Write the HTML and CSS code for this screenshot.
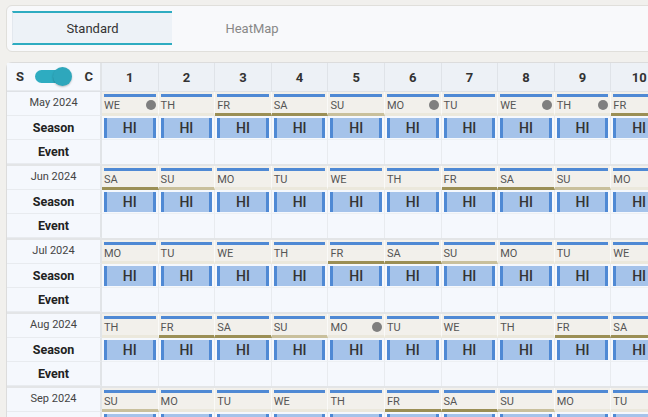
FILE: index.html
```html
<!DOCTYPE html>
<html lang="en">
<head>
    <meta charset="UTF-8">
    <meta name="viewport" content="width=device-width, initial-scale=1.0">
    <title>Season Planner</title>
    <link rel="stylesheet" href="styles.css">
</head>
<body>

<div class="page">
    <div class="view-tabs">
        <div class="tab active">Standard</div>
        <div class="tab">HeatMap</div>
    </div>

    <div class="planner" id="planner">
        <div class="head" id="head">
            <div class="side switch">
                <span>S</span>
                <span class="toggle"><span class="knob"></span></span>
                <span>C</span>
            </div>
        </div>
    </div>
</div>

<script>
const monthNames = ["Jan", "Feb", "Mar", "Apr", "May", "Jun", "Jul", "Aug", "Sep", "Oct", "Nov", "Dec"];
const dayNames = ["SU", "MO", "TU", "WE", "TH", "FR", "SA"];
const months = [[2024, 4], [2024, 5], [2024, 6], [2024, 7], [2024, 8]];
const marked = { "2024-4": [1, 6, 8, 9], "2024-7": [5] };

function buildHeader() {
    let head = document.getElementById("head");
    for (let d = 1; d <= 31; d++) {
        let cell = document.createElement("div");
        cell.className = "num";
        cell.textContent = d;
        head.appendChild(cell);
    }
}

function buildMonth(year, month) {
    let days = new Date(year, month + 1, 0).getDate();
    let marks = marked[year + "-" + month] || [];
    let html = `<div class="side month-name">${monthNames[month]} ${year}</div>
        <div class="side row-label">Season</div>
        <div class="side row-label">Event</div>`;

    for (let d = 1; d <= days; d++) {
        let wd = new Date(year, month, d).getDay();
        let kind = wd == 5 || wd == 6 ? "weekend" : wd == 0 ? "sunday" : "";
        let dot = marks.includes(d) ? '<span class="dot"></span>' : "";
        html += `<div class="day ${kind}"><div class="bar"></div><div class="dn"><span>${dayNames[wd]}</span>${dot}</div></div>
            <div class="season"><div class="hi">HI</div></div>
            <div class="event"></div>`;
    }

    let block = document.createElement("div");
    block.className = "month";
    block.innerHTML = html;
    document.getElementById("planner").appendChild(block);
}

buildHeader();
months.forEach(m => buildMonth(m[0], m[1]));
</script>

</body>
</html>
```

FILE: styles.css
```css
* { box-sizing: border-box; }
body {
    margin: 0;
    background: #f1f0ed;
    font-family: Roboto, "Liberation Sans", sans-serif;
    color: #333;
    overflow: hidden;
}
.page { padding: 5px 0 0 6px; }

.view-tabs {
    display: flex;
    background: #f8f9fb;
    border: 1px solid #e0dfdb;
    border-radius: 6px;
    padding: 5px 5px 6px;
    margin-right: -20px;
}
.tab {
    width: 160px;
    height: 34px;
    display: flex;
    align-items: center;
    justify-content: center;
    font-size: 13px;
    color: #888;
    border-top: 2px solid transparent;
    border-bottom: 2px solid transparent;
}
.tab.active {
    background: #edf2f7;
    color: #333;
    border-color: #2eacc1;
    border-left: 1px solid #e3e8ee;
}

.planner {
    margin-top: 10px;
    width: max-content;
    border: 1px solid #dcdcdc;
    border-radius: 6px 0 0 0;
    background: #f5f8fd;
}
.head, .month {
    display: grid;
    grid-template-columns: 95px;
    grid-auto-columns: 56.6px;
    grid-auto-flow: column;
}
.head {
    height: 29px;
    background: #edf1f6;
    border-bottom: 1px solid #dfe2e6;
    border-radius: 6px 0 0 0;
}
.num {
    display: flex;
    align-items: center;
    justify-content: center;
    font-size: 13px;
    font-weight: bold;
    border-right: 1px solid #dfe3e8;
}
.switch {
    display: flex;
    align-items: center;
    justify-content: space-between;
    padding: 0 7px 0 9px;
    font-size: 13px;
    font-weight: bold;
    border-right: 1px solid #dfe3e8;
}
.toggle {
    position: relative;
    width: 30px;
    height: 13px;
    border-radius: 7px;
    background: #2eacc1;
    margin-right: 8px;
}
.toggle .knob {
    position: absolute;
    right: -7px;
    top: -3px;
    width: 19px;
    height: 19px;
    border-radius: 50%;
    background: #2ea7bc;
    box-shadow: 0 1px 2px rgba(0, 0, 0, 0.25);
}

.month {
    grid-template-rows: 24px 24px 24px;
    border-bottom: 2px solid #e3e5e7;
}
.side {
    background: #f5f8fd;
    border-right: 2px solid #e1e4e7;
    border-bottom: 1px solid #e8ebef;
}
.month-name {
    text-align: center;
    font-size: 11px;
    color: #444;
    padding-top: 4px;
}
.row-label {
    display: flex;
    align-items: center;
    justify-content: center;
    font-size: 12.5px;
    font-weight: bold;
    color: #222;
}

.day {
    background: #f2f0eb;
    border-right: 1px solid #fafaf8;
    border-bottom: 3px solid #ebe8dc;
    padding: 2px 2px 0;
}
.day.weekend { border-bottom-color: #9b8f55; }
.day.sunday { border-bottom-color: #c9c09c; }
.bar { height: 3px; background: #4f89d4; }
.dn {
    height: 16px;
    display: flex;
    align-items: center;
    justify-content: space-between;
    font-size: 11px;
    color: #555;
}
.dot {
    width: 10px;
    height: 10px;
    border-radius: 50%;
    background: #7f7f7f;
}

.season {
    border-right: 1px solid #e8ebef;
    border-bottom: 1px solid #edf0f3;
    padding: 2px 2px 1px;
}
.hi {
    height: 100%;
    display: flex;
    align-items: center;
    justify-content: center;
    background: #a5c3ea;
    border-left: 3px solid #4f89d4;
    border-right: 3px solid #4f89d4;
    font-size: 14px;
    font-weight: 500;
    color: #333;
}
.event { border-right: 1px solid #e8ebef; }
```
